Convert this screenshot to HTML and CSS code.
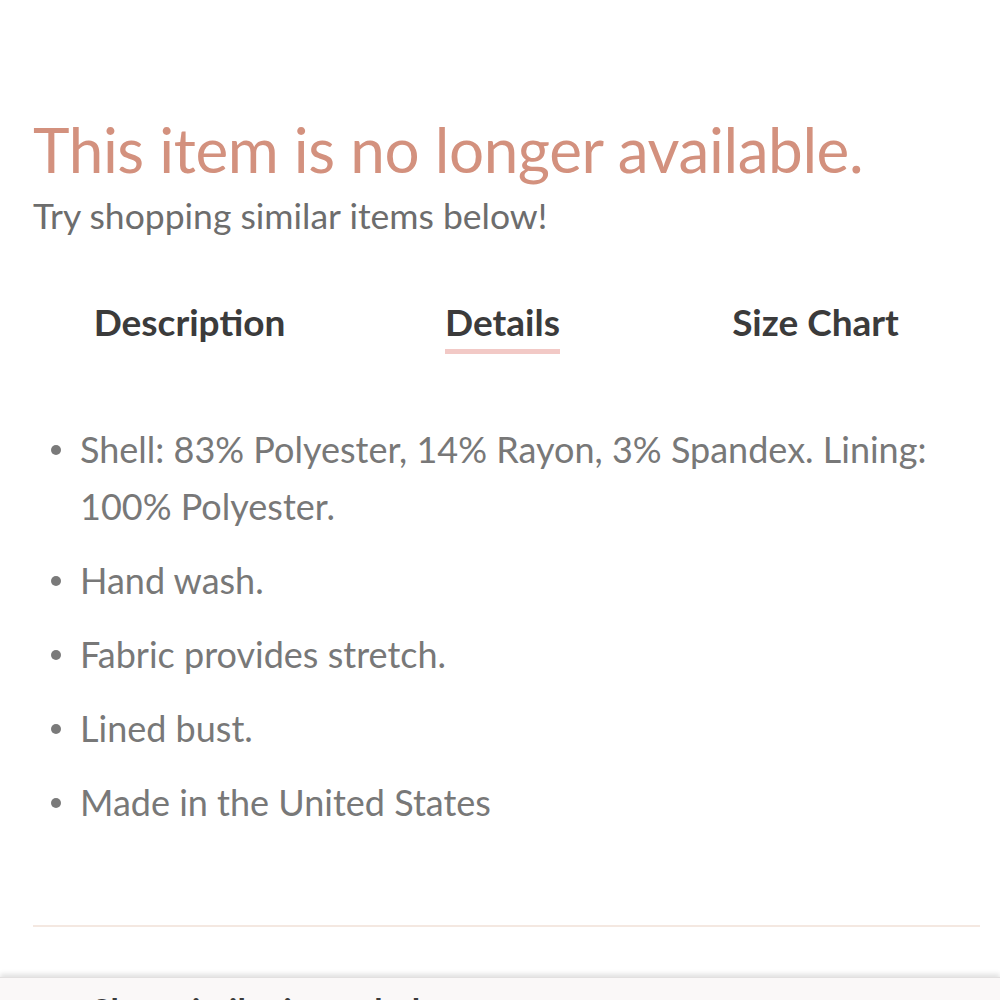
FILE: index.html
```html
<!DOCTYPE html>
<html lang="en">
<head>
<meta charset="utf-8">
<title>Item unavailable</title>
<link rel="stylesheet" href="styles.css">
</head>
<body>
<main class="page">
  <section class="notice">
    <h1 class="notice-title">This item is no longer available.</h1>
    <p class="notice-sub">Try shopping similar items below!</p>
  </section>
  <nav class="tabs">
    <div class="tab"><span class="tab-label">Description</span></div>
    <div class="tab tab-active"><span class="tab-label">Details</span></div>
    <div class="tab"><span class="tab-label">Size Chart</span></div>
  </nav>
  <ul class="details">
    <li>Shell: 83% Polyester, 14% Rayon, 3% Spandex. Lining: 100% Polyester.</li>
    <li>Hand wash.</li>
    <li>Fabric provides stretch.</li>
    <li>Lined bust.</li>
    <li>Made in the United States</li>
  </ul>
  <hr class="divider">
</main>
<footer class="similar">
  <h2 class="similar-title">Shop similar items below</h2>
</footer>
</body>
</html>
```

FILE: styles.css
```css
html, body {
  margin: 0;
  padding: 0;
  background: #ffffff;
}
body {
  font-family: Lato, "Open Sans", "DejaVu Sans", sans-serif;
  width: 1000px;
  height: 1000px;
  overflow: hidden;
}
.page {
  padding: 110px 20px 0 33px;
}
.notice-title {
  margin: 0;
  font-size: 62px;
  font-weight: 400;
  line-height: 78px;
  color: #d3917e;
  letter-spacing: -0.4px;
}
.notice-sub {
  margin: 4px 0 0 0;
  font-size: 35.5px;
  line-height: 48px;
  color: #6d6d6d;
}
.tabs {
  display: grid;
  grid-template-columns: repeat(3, 313px);
  margin-top: 59px;
}
.tab {
  display: flex;
  justify-content: center;
}
.tab-label {
  font-size: 37px;
  font-weight: 700;
  line-height: 46px;
  color: #3b3b3b;
  padding-bottom: 4px;
  border-bottom: 5px solid transparent;
}
.tab-active .tab-label {
  border-bottom-color: #f2c9c6;
}
.details {
  list-style: none;
  margin: 67px 0 0 0;
  padding: 0 0 0 47px;
  color: #787878;
  font-size: 36px;
  line-height: 57px;
}
.details li {
  position: relative;
  margin-bottom: 17px;
}
.details li::before {
  content: "";
  position: absolute;
  left: -29px;
  top: 24px;
  width: 10px;
  height: 10px;
  border-radius: 50%;
  background: #7a7a7a;
}
.divider {
  margin: 94px 0 0 0;
  border: 0;
  height: 2px;
  background: #f4e8e1;
}
.similar {
  margin-top: 50px;
  background: #faf8f8;
  box-shadow: 0 -3px 5px rgba(0, 0, 0, 0.12);
  border-top: 1px solid #e2e0e0;
  height: 60px;
  padding-left: 92px;
}
.similar-title {
  margin: 0;
  padding-top: 11px;
  font-size: 34px;
  line-height: 44px;
  font-weight: 700;
  color: #3b3b3b;
}
```
